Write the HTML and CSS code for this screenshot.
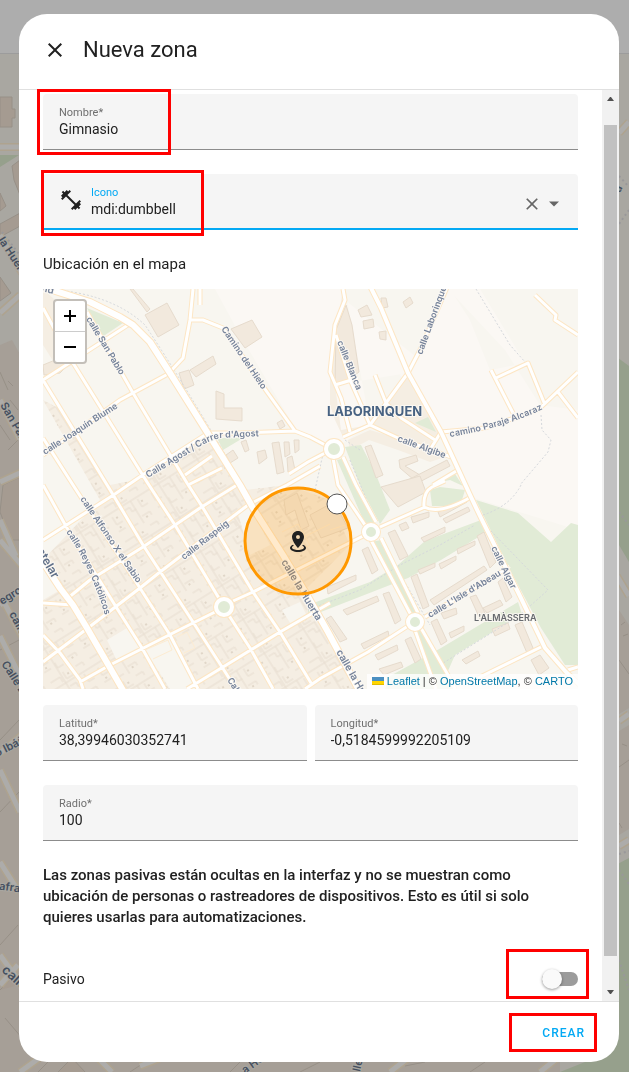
FILE: index.html
```html
<!DOCTYPE html>
<html lang="es">
<head>
<meta charset="utf-8">
<meta name="viewport" content="width=device-width, initial-scale=1">
<title>Nueva zona</title>
<link rel="stylesheet" href="styles.css">
</head>
<body>
<svg class="backdrop" viewBox="0 0 629 1072" preserveAspectRatio="xMidYMid slice" aria-hidden="true">
  <rect width="629" height="1072" fill="#a9a7a1"/>
  <path d="M0 345L12 340L40 390V1072H0Z M400 1052H560V1072H400Z M0 1050H400V1072H0Z M619 610L629 625V708L619 714Z M619 731L629 725V829L619 835Z" fill="#a69f97"/>
  <path d="M0 167L19 155H0Z M610 352L629 366V562L619 545L610 530Z M610 868L629 858V1072H560L610 1052Z M14 886L19 884V894Z" fill="#96a08c"/>
  <g class="bd-block">
    <path d="M0 97H12V109H15V118H12V127H0Z"/>
    <path d="M12 166L20 160V195L14 180Z"/>
    <path d="M0 193L6 206L0 211Z"/>
    <path d="M0 224L22 212V225L0 237Z"/>
    <path d="M0 277L11 293L0 301Z"/>
    <path d="M3 485L20 477V540H11L0 512Z"/>
    <path d="M0 812L19 792M0 945L18 925M0 990L14 976L22 984M5 1018L22 1038M0 740L19 720M0 650L19 640"/>
    <path d="M8 381L13 386M0 372L8 390M10 400L18 410M0 425L10 440M8 450L18 440" />
    <path d="M38 1072L50 1060M58 1072L72 1058L85 1072M130 1072L145 1062M405 1066L425 1062M230 1072L240 1062M300 1072L320 1062M470 1072L485 1062"/>
    <path d="M619 660L629 674M619 767L629 760M621 625L625 622M623 636L628 634M622 744L627 746M619 823L622 828"/>
  </g>
  <g fill="none" stroke="#aea38f" stroke-width="8">
    <path id="bd-roads" d="M0 147H22M0 235L22 273M0 313L20 295M0 400L20 439M0 482L22 472M0 520L16 556M0 540L22 566M0 605L22 590M5 604L22 636M0 636L22 680M0 753L22 735M0 770L20 812M0 862L19 892M0 955L22 985M0 985L18 965M20 1072L42 1056M112 1072L98 1058M140 1066L166 1056M390 1072L408 1058M619 133L629 122M617 576L629 596M619 721L629 714M619 846L629 840M540 1072L565 1052"/>
  </g>
  <g fill="none" stroke="#adacaa" stroke-width="5"><use href="#bd-roads"/></g>
  <path d="M2 232L22 258M619 176L629 187M629 210L619 224M619 512L629 525M619 854L629 851M619 870L629 884M619 960L629 990" fill="none" stroke="#99989a" stroke-width="2" stroke-dasharray="2 3"/>
  <g class="bd-text">
    <text transform="translate(-2 240) rotate(57)">la Huerta</text>
    <text transform="translate(0 405) rotate(60)">San Pablo</text>
    <text transform="translate(2 605) rotate(-32)">egro</text>
    <text transform="translate(9 614) rotate(62)">calle</text>
    <text transform="translate(1 664) rotate(57)">Calle E</text>
    <text transform="translate(-3 757) rotate(-27)">o Ibáñez</text>
    <text transform="translate(-4 889) rotate(8)">lafranca</text>
    <text class="bd-big" transform="translate(1 971) rotate(42)">calle</text>
    <text transform="translate(245 1074) rotate(-36)">a Huerta</text>
    <text transform="translate(360 1072) rotate(-78)">lle</text>
    <text transform="translate(620 193) rotate(-65)">a</text>
  </g>
  <rect width="629" height="53" fill="#adadad"/>
  <rect y="53" width="629" height="1" fill="#9c9c9c"/>
</svg>

<main class="dialog" role="dialog" aria-labelledby="title">
  <header class="dialog-header">
    <button class="icon-button" type="button" aria-label="Cerrar">
      <svg class="icon" viewBox="0 0 24 24"><path d="M19,6.41L17.59,5L12,10.59L6.41,5L5,6.41L10.59,12L5,17.59L6.41,19L12,13.41L17.59,19L19,17.59L13.41,12L19,6.41Z"/></svg>
    </button>
    <h1 class="title" id="title">Nueva zona</h1>
  </header>

  <div class="dialog-body">
    <form class="content" id="zone-form">
      <div class="field">
        <label for="name">Nombre*</label>
        <input id="name" type="text" value="Gimnasio">
        <span class="mark mark-name"></span>
      </div>

      <div class="field field-icon">
        <svg class="icon" viewBox="0 0 24 24"><path d="M20.57,14.86L22,13.43L20.57,12L17,15.57L8.43,7L12,3.43L10.57,2L9.14,3.43L7.71,2L5.57,4.14L4.14,2.71L2.71,4.14L4.14,5.57L2,7.71L3.43,9.14L2,10.57L3.43,12L7,8.43L15.57,17L12,20.57L13.43,22L14.86,20.57L16.29,22L18.43,19.86L19.86,21.29L21.29,19.86L19.86,18.43L22,16.29L20.57,14.86Z"/></svg>
        <div class="field-text">
          <label for="icon">Icono</label>
          <input id="icon" type="text" value="mdi:dumbbell">
        </div>
        <div class="field-actions">
          <button class="small-button" type="button" aria-label="Borrar">
            <svg viewBox="0 0 24 24"><path d="M19,6.41L17.59,5L12,10.59L6.41,5L5,6.41L10.59,12L5,17.59L6.41,19L12,13.41L17.59,19L19,17.59L13.41,12L19,6.41Z"/></svg>
          </button>
          <button class="small-button" type="button" aria-label="Abrir lista">
            <svg viewBox="0 0 24 24"><path d="M6 9L12 15L18 9Z"/></svg>
          </button>
        </div>
        <span class="mark mark-icon"></span>
      </div>

      <p class="map-label">Ubicación en el mapa</p>

      <div class="map">
        <svg class="map-canvas" viewBox="43 289 535 400" preserveAspectRatio="xMidYMid slice" role="img" aria-label="Mapa">
          <defs>
            <pattern id="houses" width="46" height="40" patternUnits="userSpaceOnUse" patternTransform="rotate(-32)">
              <path d="M3 6H14V12M19 3V11H27M33 5H41V9M5 18V27H12M18 19H25V24H30M36 16V25H43M3 34H11M17 31V37H24M31 33H40V37M0 14H46M16 0V40M29 14V40" fill="none" stroke="#e7ddd0" stroke-width="1"/>
              <path d="M8 21H10M22 7H24M38 20H40M34 36H36M6 31H8" stroke="#e0d6c8" stroke-width="2"/>
            </pattern>
            <path id="agost" d="M148 478L196 449Q207 441 221 438L264 436"/>
            <path id="paraje" d="M450 437Q510 427 551 405"/>
            <path id="reyes" d="M66 532Q90 565 106 618"/>
          </defs>

          <rect x="43" y="289" width="535" height="400" fill="#f8f6f0"/>
          <path d="M215 289L240 335L295 428L334 449L370 425L345 289Z M408 289H480L525 363L491 370L440 432H485L530 460L480 497L578 530V410L540 405L505 350L448 289Z M345 300L420 360L408 373L335 385Z" fill="#fbf8f4"/>
          <path d="M400 375L441 432L471 497L578 530V425L530 420L490 370L470 320L450 289L420 350Z" fill="#fbf8f4"/>

          <g fill="#f5eee3">
            <path d="M43 400L62 410L110 485L147 478L208 434L245 490L287 485L330 500L350 545L305 590L355 689H43V600L60 590L43 560L100 500Z"/>
            <path d="M43 289L55 300L75 363L60 372L43 345Z M343 289L335 385L341 430L370 425L408 373L441 432L431 448L398 438L370 425L343 437L335 420L330 405V370Z"/>
            <path d="M348 440L370 430L451 455L430 462L398 450L369 440L350 450Z"/>
          </g>
          <path d="M43 400L62 410L110 485L147 478L208 434L245 490L287 485L330 500L350 545L305 590L355 689H43V600L60 590L43 560L100 500Z" fill="url(#houses)"/>
          <path d="M107 640L127 628L140 648L117 661Z M47 485L65 480L76 500L68 514Z M145 650L172 637L200 689H170Z M237 510L250 507L270 545L250 555Z M282 610L300 602L308 618L292 626Z" fill="#f8f6f0"/>

          <g fill="#e1ebd6">
            <path d="M87 308L123 323L102 337Z M217 438H243L223 450Z M415 423L428 417L436 432Z"/>
            <path d="M345 447L361 445L375 472L390 510L380 524L362 490Z"/>
            <path d="M337 460L345 458L376 522L366 526Z M371 542L381 540L418 613L411 615Z M417 630L421 628L455 689H436Z"/>
            <path d="M308 605L370 582L398 565L425 541L481 520L485 533L441 560L408 578L308 617Z"/>
            <path d="M390 676L441 648L518 602L522 614L455 655L440 689H385Z"/>
            <path d="M476 500L518 513L551 542L571 523L578 525V665L565 665L541 628L510 570Z"/>
            <path d="M430 490L440 487L465 490L462 500L450 506L432 506Z M430 484L455 474L463 486L450 480Z"/>
          </g>

          <g class="building">
            <path d="M145 315L167 303L179 325L158 337Z"/><path d="M133 289L150 309L147 312L130 289Z"/>
            <path d="M231 329L252 320L262 337L245 348Z"/><path d="M190 370L213 356L216 364L196 377Z"/><path d="M179 373L189 370L194 385L184 389Z"/>
            <path d="M216 391L224 394V408H242V421L216 419Z"/><path d="M277 423L282 420L285 426L280 429Z"/>
            <path d="M241 442L246 440L249 450L245 452Z"/><path d="M272 443L279 442L284 472L277 474Z"/><path d="M284 442H289L290 454L285 457Z"/><path d="M294 440H299V450L295 453Z"/><path d="M226 455L233 450L238 458L230 463Z"/><path d="M257 452L265 450L267 458L259 464Z"/><path d="M287 458L292 456L295 470L288 472Z"/>
            <path d="M403 302L410 297L413 303L406 308Z"/><path d="M358 310L367 305L372 315L361 317Z"/><path d="M363 321L373 319L374 327L364 329Z"/><path d="M379 332L386 331V340L380 339Z"/><path d="M381 298H386L388 307L382 308Z"/>
            <path d="M336 330L346 305L352 325L359 372L351 378L335 385Z"/>
            <path d="M43 365L60 358L68 365L60 373L44 375Z"/>
            <path d="M399 460L416 455L418 461L405 466L420 475L414 480L400 468Z"/>
            <path d="M408 480L447 460L450 466L410 487Z"/><path d="M365 447L371 445L383 475L376 478Z"/>
            <path d="M381 487L420 476L426 492L398 507Z"/><path d="M388 533L395 530L408 556L400 560Z"/><path d="M411 517L429 512V517L413 523Z"/><path d="M399 525L406 522L409 528L402 531Z"/>
            <path d="M421 538L445 527V532L424 542Z"/><path d="M443 519L468 507L470 511L446 523Z"/><path d="M457 549L475 541V545L458 554Z"/><path d="M477 536L484 532L496 562L490 568Z"/>
            <path d="M438 512L467 499V502L440 517Z"/><path d="M418 570L435 563V567L420 574Z"/><path d="M439 564L456 556V560L441 569Z"/><path d="M411 577L417 574L429 606L423 609Z"/>
            <path d="M430 600L484 566L487 570L434 605Z"/><path d="M431 622L437 619L447 641L441 645Z"/><path d="M441 613L456 608L457 614L444 619Z"/><path d="M449 633L464 626V631L451 638Z"/>
            <path d="M470 597L476 595L486 615L480 619Z"/><path d="M498 582L503 578L512 597L506 602Z"/><path d="M483 608L500 600L503 605L487 613Z"/>
            <path d="M515 625L522 622L533 648L527 653Z"/><path d="M492 629L508 623L510 629L495 636Z"/><path d="M462 660L478 651L480 656L466 664Z"/>
            <path d="M343 610L377 596L379 601L347 615Z"/><path d="M383 594L389 592L401 620L395 624Z"/><path d="M361 644L388 631L389 636L364 649Z"/><path d="M375 655L397 645L398 650L378 660Z"/><path d="M405 640L411 637L421 659L415 663Z"/>
            <path d="M362 550L368 547L378 570L372 574Z"/><path d="M327 587L356 575V580L328 594Z"/><path d="M326 619L331 616L347 639L340 642Z"/><path d="M379 669L401 662L403 667L384 675Z"/>
            <path d="M284 500L297 493L309 526L301 530L295 510L286 515Z"/><path d="M310 515L334 502L348 528L321 538Z"/><path d="M531 660L540 655L549 668L539 675Z"/>
          </g>

          <path class="path-dots" d="M43 289Q110 292 145 325Q185 385 237 475M476 289L510 345L525 362M541 415L542 430L551 440L548 452L520 485M521 485Q510 507 480 516M308 610L360 590L400 565L440 545L475 525M440 665L520 615L548 590L490 530M325 445L315 490M350 460L375 520M383 545L430 625M345 440L360 450"/>

          <g class="road-edge">
            <path id="minor" d="M43 455L120 400L168 374L183 358L190 320L193 289M190 320H203L223 328L267 392L295 431L310 437L327 446M295 431L240 433H208L147 472L115 494L43 540M128 325L43 380M87 312L133 393L187 483L203 508L253 592L280 632L311 683M43 308L73 363L147 482L175 525L220 600M228 614L250 648L273 689M43 380L112 493L143 545L193 622L222 667L236 689M43 438L73 485L138 585L170 635L198 689M43 485L67 528L118 610L142 648L165 689M237 485L200 508L143 547L90 580L68 598M320 466L287 485L248 505L160 572L140 588L88 628L43 662M365 535L310 563L253 592L233 601M215 612L173 633L110 665L80 682M330 603L280 632L223 667L187 689M43 635L60 653L80 680L83 689M325 453L308 462L289 474M333 458L338 485L365 525M343 457L356 485L376 522M371 540L411 615M381 538L418 613M415 630L436 689M421 628L448 675L455 689M343 289L345 300L335 325L330 372L341 398L350 432M336 335L351 382L370 425M448 285L421 348L408 373L386 403L370 425L343 437M335 385L358 378M375 375L386 403L401 418L435 440M370 425L398 438L451 457M441 432L431 448M441 432L485 428L538 410L578 372M558 392L578 418M545 405L528 363L496 378M491 370L513 413M535 295L556 315L555 320L578 335M433 485L458 470M380 527L425 507M424 507Q423 492 432 487L445 481M424 507Q440 515 471 497M425 617L501 572L509 566M408 626L368 652L321 678L305 689M478 678L541 647M568 670L578 667M200 289V305M43 603L73 605M185 475L212 456M188 485L222 468"/>
          </g>
          <g class="road"><use href="#minor"/></g>
          <g class="main-edge">
            <path id="mainroads" d="M43 287L90 302L120 317L133 325L150 342L170 373L207 432L240 485L253 508L283 555L307 595L328 632L360 692M43 562L60 588L73 605L87 628L124 692"/>
          </g>
          <g class="main-road"><use href="#mainroads"/></g>
          <g class="second-edge">
            <path id="second" d="M370 286L381 308L408 373L441 432L471 497L481 518L518 592L545 648L566 672L585 690"/>
          </g>
          <g class="second-road"><use href="#second"/></g>
          <g class="roundabout-edge"><circle cx="334" cy="449" r="8"/><circle cx="371" cy="532" r="7"/><circle cx="415" cy="622" r="7"/><circle cx="224" cy="607" r="8"/></g>
          <g class="roundabout"><circle cx="334" cy="449" r="8"/><circle cx="371" cy="532" r="7"/><circle cx="415" cy="622" r="7"/><circle cx="224" cy="607" r="8"/></g>
          <path d="M145 650L168 640L172 650L153 659M177 637L187 632L195 648L184 653M282 532L298 524L310 545L296 552M330 530L345 525M298 540L330 524" fill="none" stroke="#fdecd2" stroke-width="1"/>

          <g class="street">
            <text transform="translate(86 319) rotate(59)">calle San Pablo</text>
            <text transform="translate(45 455) rotate(-33)">calle Joaquín Blume</text>
            <text transform="translate(221 329) rotate(56)">Camino del Hielo</text>
            <text><textPath href="#agost">Calle Agost / Carrer d'Agost</textPath></text>
            <text transform="translate(337 342) rotate(68)">calle Blanca</text>
            <text transform="translate(422 355) rotate(-70)">calle Laborinquen</text>
            <text transform="translate(397 441) rotate(20)">calle Algibe</text>
            <text><textPath href="#paraje">camino Paraje Alcaraz</textPath></text>
            <text transform="translate(80 499) rotate(56)">calle Alfonso X el Sabio</text>
            <text><textPath href="#reyes">calle Reyes Católicos</textPath></text>
            <text transform="translate(184 560) rotate(-38)">calle Raspeig</text>
            <text transform="translate(491 548) rotate(64)">calle Algar</text>
            <text transform="translate(430 618) rotate(-31)">calle L'Isle d'Abeau</text>
            <text transform="translate(227 680) rotate(58)">Calle</text>
            <g class="wide">
              <text class="avenue" transform="translate(33 545) rotate(60)">astelar</text>
              <text transform="translate(281 562) rotate(59)">calle la Huerta</text>
              <text transform="translate(336 652) rotate(60)">calle la Huerta</text>
              <text transform="translate(41 291) rotate(14)">nd</text>
            </g>
          </g>
          <text class="district" x="327" y="416">LABORINQUEN</text>
          <text class="place" x="474" y="621">L'ALMÀSSERA</text>

          <circle cx="298" cy="541" r="53" fill="#ff9800" fill-opacity=".2" stroke="#ff9800" stroke-width="3"/>
          <circle cx="337" cy="504" r="10" fill="#fff" stroke="#555" stroke-width="1"/>
          <g transform="translate(286 529)" fill="#212121"><path d="M12,2C15.31,2 18,4.66 18,7.95C18,12.41 12,19 12,19C12,19 6,12.41 6,7.95C6,4.66 8.69,2 12,2M12,6A2,2 0 0,0 10,8A2,2 0 0,0 12,10A2,2 0 0,0 14,8A2,2 0 0,0 12,6M20,19C20,21.21 16.42,23 12,23C7.58,23 4,21.21 4,19C4,17.71 5.22,16.56 7.11,15.83L7.75,16.74C6.67,17.19 6,17.81 6,18.5C6,19.88 8.69,21 12,21C15.31,21 18,19.88 18,18.5C18,17.81 17.33,17.19 16.25,16.74L16.89,15.83C18.78,16.56 20,17.71 20,19Z"/></g>
        </svg>
        <div class="zoom-control">
          <button type="button" aria-label="Acercar"><svg viewBox="0 0 12 12"><path d="M0 6H12M6 0V12"/></svg></button>
          <button type="button" aria-label="Alejar"><svg viewBox="0 0 12 12"><path d="M0 6H12"/></svg></button>
        </div>
        <div class="attribution">
          <svg viewBox="0 0 12 8" aria-hidden="true"><path fill="#4C90C1" d="M0 0h12v4H0z"/><path fill="#FFD500" d="M0 4h12v3H0z"/><path fill="#E0BC00" d="M0 7h12v1H0z"/></svg>
          <a href="#leaflet">Leaflet</a> | © <a href="#osm">OpenStreetMap</a>, © <a href="#carto">CARTO</a>
        </div>
      </div>

      <div class="row">
        <div class="field">
          <label for="lat">Latitud*</label>
          <input id="lat" type="text" value="38,39946030352741">
        </div>
        <div class="field">
          <label for="lng">Longitud*</label>
          <input id="lng" type="text" value="-0,5184599992205109">
        </div>
      </div>

      <div class="field">
        <label for="radius">Radio*</label>
        <input id="radius" type="text" value="100">
      </div>

      <p class="note">Las zonas pasivas están ocultas en la interfaz y no se muestran como ubicación de personas o rastreadores de dispositivos. Esto es útil si solo quieres usarlas para automatizaciones.</p>

      <div class="switch-row">
        <label for="passive">Pasivo</label>
        <input class="switch" id="passive" type="checkbox" role="switch">
        <span class="mark mark-switch"></span>
      </div>
    </form>

    <div class="scrollbar" aria-hidden="true">
      <svg viewBox="0 0 7 4"><path d="M0 4L3 0H4L7 4Z"/></svg>
      <span class="thumb"></span>
      <svg viewBox="0 0 7 4"><path d="M0 0L3 4H4L7 0Z"/></svg>
    </div>
  </div>

  <footer class="dialog-footer">
    <button class="create" type="submit" form="zone-form">CREAR</button>
    <span class="mark mark-create"></span>
  </footer>
</main>
</body>
</html>
```
FILE: styles.css
```css
* {
  box-sizing: border-box;
}

body {
  margin: 0;
  padding: 14px 10px 10px 19px;
  background: #a9a7a1;
  color: #212121;
  font-family: Roboto, "Noto Sans", sans-serif;
  font-size: 14px;
}

button,
input {
  margin: 0;
  padding: 0;
  border: 0;
  background: none;
  color: inherit;
  font: inherit;
}

input:focus {
  outline: none;
}

h1,
p {
  margin: 0;
}

.backdrop {
  position: fixed;
  inset: 0;
  z-index: -1;
  width: 100%;
  height: 100%;
}

.bd-block {
  fill: #a59b91;
  stroke: #979087;
  stroke-width: 1;
}

.bd-text {
  fill: #454f5e;
  stroke: #a9a7a1;
  stroke-width: 2;
  paint-order: stroke;
  font: 600 11px Inter, sans-serif;
}

.bd-big {
  font-size: 13px;
}

.dialog {
  border-radius: 28px;
  background: #fff;
}

.dialog-header {
  display: flex;
  align-items: center;
  gap: 16px;
  height: 76px;
  padding: 0 24px 4px;
  border-bottom: 1px solid #e0e0e0;
}

.icon {
  display: block;
  flex: none;
  width: 24px;
  height: 24px;
  fill: currentColor;
}

.title {
  font-size: 22px;
  font-weight: 400;
  line-height: 28px;
}

.dialog-body {
  display: flex;
}

.content {
  display: flex;
  flex: 1;
  flex-direction: column;
  min-width: 0;
  padding: 4px 24px 10px;
}

.field {
  position: relative;
  flex: 1;
  min-width: 0;
  height: 56px;
  margin-bottom: 24px;
  padding: 12px 16px 0;
  border-bottom: 1px solid #8c8c8c;
  border-radius: 4px 4px 0 0;
  background: #f5f5f5;
}

.content > .field {
  flex: none;
}

.field label {
  display: block;
  color: #6f6f6f;
  font-size: 11px;
  line-height: 14px;
}

.field input {
  display: block;
  width: 100%;
  height: 18px;
}

.field-icon {
  display: flex;
  gap: 8px;
  border-bottom: 2px solid #03a9f4;
}

.field-icon .icon {
  margin-top: 2px;
}

.field-icon label {
  color: #03a9f4;
}

.field-text {
  flex: 1;
  min-width: 0;
}

.field-actions {
  display: flex;
  gap: 2px;
  margin: 8px -2px 0 0;
}

.small-button {
  width: 20px;
  height: 20px;
}

.small-button svg {
  display: block;
  width: 20px;
  height: 20px;
  fill: #666;
}

.map-label {
  margin-bottom: 15px;
  font-size: 15px;
  line-height: 20px;
}

.map {
  position: relative;
  height: 400px;
  margin-bottom: 16px;
  overflow: hidden;
}

.map-canvas {
  display: block;
  width: 100%;
  height: 100%;
}

.building {
  fill: #f2e9dd;
  stroke: #e6dbcd;
  stroke-width: 1;
}

.path-dots {
  fill: none;
  stroke: #d5d8dc;
  stroke-width: 1;
  stroke-dasharray: 2 2;
}

.road-edge,
.road,
.main-edge,
.main-road,
.second-edge,
.second-road {
  fill: none;
  stroke-linejoin: round;
}

.road-edge {
  stroke: #fde6c4;
  stroke-width: 5;
}

.road {
  stroke: #fff;
  stroke-width: 3;
}

.main-edge {
  stroke: #fde4c0;
  stroke-width: 8;
}

.main-road {
  stroke: #fff;
  stroke-width: 6;
}

.second-edge {
  stroke: #fde6c4;
  stroke-width: 6;
}

.second-road {
  stroke: #fff;
  stroke-width: 4;
}

.roundabout-edge {
  fill: none;
  stroke: #fde6c4;
  stroke-width: 6;
}

.roundabout {
  fill: #e1ebd6;
  stroke: #fff;
  stroke-width: 4;
}

.street {
  fill: #76839a;
  stroke: #fbf8f3;
  stroke-width: 2;
  paint-order: stroke;
  font: 600 9px Inter, sans-serif;
}

.wide {
  font-size: 10px;
}

.avenue {
  fill: #5f6f88;
  font-size: 12px;
}

.district {
  fill: #476282;
  stroke: #fbf8f3;
  stroke-width: 2;
  paint-order: stroke;
  font: 700 13px Inter, sans-serif;
}

.place {
  fill: #66696e;
  stroke: #f8f6f0;
  stroke-width: 2;
  paint-order: stroke;
  font: 600 9px Inter, sans-serif;
}

.zoom-control {
  position: absolute;
  top: 10px;
  left: 10px;
  border: 2px solid #c3bfb9;
  border-radius: 4px;
  background: #fff;
}

.zoom-control button {
  display: grid;
  place-items: center;
  width: 30px;
  height: 30px;
}

.zoom-control button + button {
  height: 31px;
  border-top: 1px solid #ccc;
}

.zoom-control svg {
  width: 12px;
  height: 12px;
  fill: none;
  stroke: #000;
  stroke-width: 2;
}

.attribution {
  position: absolute;
  right: 0;
  bottom: 0;
  padding: 0 5px;
  background: rgba(255, 255, 255, 0.8);
  color: #333;
  font: 11px/15px "Liberation Sans", Arial, sans-serif;
  white-space: nowrap;
}

.attribution svg {
  width: 12px;
  height: 8px;
}

.attribution a {
  color: #0078a8;
  text-decoration: none;
}

.row {
  display: flex;
  gap: 8px;
}

.note {
  font-size: 15px;
  font-weight: 500;
  line-height: 21px;
}

.switch-row {
  position: relative;
  display: flex;
  align-items: center;
  justify-content: space-between;
  height: 24px;
  margin-top: 39px;
}

.switch {
  position: relative;
  width: 36px;
  height: 14px;
  border-radius: 7px;
  background: #9c9c9c;
  appearance: none;
}

.switch::before {
  position: absolute;
  top: -3px;
  left: 0;
  width: 20px;
  height: 20px;
  border-radius: 50%;
  background: #fafafa;
  box-shadow: 0 1px 3px rgba(0, 0, 0, 0.4);
  content: "";
}

.scrollbar {
  display: flex;
  flex: none;
  flex-direction: column;
  align-items: center;
  gap: 6px;
  width: 17px;
  padding: 7px 0;
  background: #f1f1f1;
}

.scrollbar svg {
  width: 7px;
  height: 4px;
  fill: #505050;
}

.thumb {
  flex: 1;
  width: 13px;
  margin: 18px 0 28px;
  background: #c1c1c1;
}

.dialog-footer {
  position: relative;
  display: flex;
  align-items: center;
  justify-content: flex-end;
  height: 61px;
  padding: 2px 34px 0;
  border-top: 1px solid #e0e0e0;
}

.create {
  height: 36px;
  color: #03a9f4;
  font-size: 12px;
  font-weight: 500;
  letter-spacing: 1px;
}

.mark {
  position: absolute;
  border: 3px solid #f00;
  pointer-events: none;
}

.mark-name {
  top: -5px;
  left: -6px;
  width: 134px;
  height: 66px;
}

.mark-icon {
  top: -4px;
  left: -2px;
  width: 163px;
  height: 66px;
}

.mark-switch {
  top: -18px;
  right: -11px;
  width: 83px;
  height: 50px;
}

.mark-create {
  top: 11px;
  right: 22px;
  width: 88px;
  height: 39px;
}
```
